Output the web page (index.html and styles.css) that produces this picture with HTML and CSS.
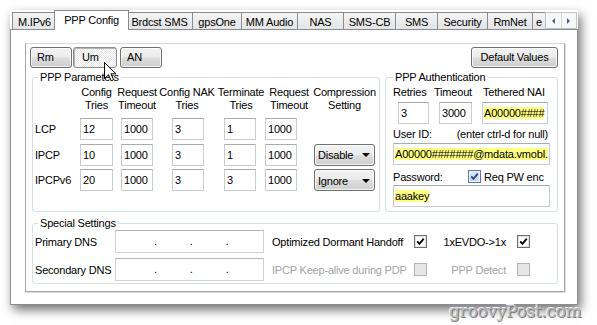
FILE: index.html
```html
<!DOCTYPE html>
<html>
<head>
<meta charset="utf-8">
<link rel="stylesheet" href="styles.css">
</head>
<body>
<div class="shot">
  <div class="tabstrip">
    <div class="tabs">
      <div class="tab t-mipv6">M.IPv6</div>
      <div class="tab sel">PPP Config</div>
      <div class="tab t-brd">Brdcst SMS</div>
      <div class="tab t-gps">gpsOne</div>
      <div class="tab t-mm">MM Audio</div>
      <div class="tab t-nas">NAS</div>
      <div class="tab t-smscb">SMS-CB</div>
      <div class="tab t-sms">SMS</div>
      <div class="tab t-sec">Security</div>
      <div class="tab t-rmnet">RmNet</div>
      <div class="tab t-e">e</div>
    </div>
    <div class="arrows"><span class="arr arr-l"></span><span class="arr arr-r"></span></div>
  </div>
  <div class="frame">
    <div class="inner">
      <div class="topbar">
        <button class="btn b-rm">Rm</button>
        <button class="btn b-um">Um</button>
        <button class="btn b-an">AN</button>
        <button class="btn b-def">Default Values</button>
      </div>
      <div class="groups">
        <fieldset class="grp grp-ppp">
          <legend>PPP Parameters</legend>
          <div class="ppp-grid">
            <div></div>
            <div class="hd hd-w33"><span>Config<br>Tries</span></div>
            <div class="hd"><span>Request<br>Timeout</span></div>
            <div class="hd hd-nak"><span>Config NAK<br>Tries</span></div>
            <div class="hd hd-term"><span>Terminate<br>Tries</span></div>
            <div class="hd hd-req2"><span>Request<br>Timeout</span></div>
            <div class="hd hd-w61"><span>Compression<br>Setting</span></div>

            <div class="lbl">LCP</div>
            <div class="tb tb-w33">12</div>
            <div class="tb">1000</div>
            <div class="tb">3</div>
            <div class="tb">1</div>
            <div class="tb">1000</div>
            <div></div>

            <div class="lbl">IPCP</div>
            <div class="tb tb-w33">10</div>
            <div class="tb">1000</div>
            <div class="tb">3</div>
            <div class="tb">1</div>
            <div class="tb">1000</div>
            <div class="cb"><span>Disable</span><i class="caret"></i></div>

            <div class="lbl">IPCPv6</div>
            <div class="tb tb-w33">20</div>
            <div class="tb">1000</div>
            <div class="tb">3</div>
            <div class="tb">3</div>
            <div class="tb">1000</div>
            <div class="cb"><span>Ignore</span><i class="caret"></i></div>
          </div>
        </fieldset>
        <fieldset class="grp grp-auth">
          <legend>PPP Authentication</legend>
          <div class="auth">
            <div class="auth-top">
              <div>Retries</div>
              <div>Timeout</div>
              <div class="nai-lbl">Tethered NAI</div>
              <div class="tb a-ret">3</div>
              <div class="tb a-to">3000</div>
              <div class="tb a-nai"><span class="hl">A00000####</span></div>
            </div>
            <div class="user-row"><span>User ID:</span><span>(enter ctrl-d for null)</span></div>
            <div class="tb wide"><span class="hl">A00000#######@mdata.vmobl.</span></div>
            <div class="pw-row">
              <span class="pw-lbl">Password:</span>
              <span class="chk chk-hot"><svg viewBox="0 0 11 11" width="11" height="11"><path d="M2.2 5.4 L4.4 7.8 L8.8 2.6" fill="none" stroke="#2b4a7a" stroke-width="1.8"/></svg></span>
              <span class="pw-opt">Req PW enc</span>
            </div>
            <div class="tb wide"><span class="hl">aaakey</span></div>
          </div>
        </fieldset>
      </div>
      <fieldset class="grp grp-spec">
        <legend>Special Settings</legend>
        <div class="spec-grid">
          <div class="lbl">Primary DNS</div>
          <div class="ip"><span>.</span><span>.</span><span>.</span></div>
          <div class="opt">Optimized Dormant Handoff</div>
          <span class="chk"><svg viewBox="0 0 11 11" width="11" height="11"><path d="M2.2 5.4 L4.4 7.8 L8.8 2.6" fill="none" stroke="#000" stroke-width="1.8"/></svg></span>
          <div class="opt2">1xEVDO-&gt;1x</div>
          <span class="chk"><svg viewBox="0 0 11 11" width="11" height="11"><path d="M2.2 5.4 L4.4 7.8 L8.8 2.6" fill="none" stroke="#000" stroke-width="1.8"/></svg></span>

          <div class="lbl">Secondary DNS</div>
          <div class="ip"><span>.</span><span>.</span><span>.</span></div>
          <div class="opt dis">IPCP Keep-alive during PDP</div>
          <span class="chk chk-dis"></span>
          <div class="opt2 dis">PPP Detect</div>
          <span class="chk chk-dis"></span>
        </div>
      </fieldset>
    </div>
  </div>
  <svg class="cursor" width="13" height="20" viewBox="0 0 13 20"><path d="M0.5 0.5 L0.5 16.5 L4.5 12.8 L7.2 18.8 L9.6 17.8 L7 11.8 L12 11.8 Z" fill="#fff" stroke="#000" stroke-width="1"/></svg>
</div>
<div class="wm">groovyPost.com</div>
</body>
</html>
```
FILE: styles.css
```css
* { box-sizing: border-box; }
html, body { margin: 0; padding: 0; background: #fff; }
body {
  font-family: "Liberation Sans", Arial, sans-serif;
  font-size: 11px;
  letter-spacing: -0.2px;
  color: #000;
  width: 597px;
  height: 325px;
  overflow: hidden;
  position: relative;
}
.shot {
  position: relative;
  margin: 10px 0 0 10px;
  width: 568px;
  height: 295px;
  background: #fff;
  box-shadow: 3px 5px 10px rgba(0, 0, 0, 0.55);
}

/* tabs */
.tabstrip {
  position: relative;
  z-index: 1;
  display: flex;
  height: 20px;
  padding-left: 2px;
}
.tabs {
  display: flex;
  align-items: flex-end;
  width: 533px;
  height: 20px;
  overflow: hidden;
  flex: none;
}
.tab {
  flex: none;
  height: 17px;
  margin-bottom: 1px;
  margin-left: -1px;
  border: 1px solid #898c95;
  border-bottom: 0;
  background: linear-gradient(#f4f4f4, #e4e4e4);
  display: flex;
  align-items: center;
  justify-content: center;
  white-space: nowrap;
  padding-top: 1px;
}
.tab:first-child { margin-left: 0; }
.t-mipv6 { width: 45px; }
.tab.sel {
  position: relative;
  z-index: 2;
  width: 75px;
  height: 20px;
  margin: 0 -2px 0 -3px;
  background: #fff;
  padding-top: 0;
  padding-bottom: 2px;
}
.t-brd { width: 67px; }
.t-gps { width: 50px; }
.t-mm { width: 57px; }
.t-nas { width: 47px; }
.t-smscb { width: 53px; }
.t-sms { width: 43px; }
.t-sec { width: 51px; }
.t-rmnet { width: 46px; }
.t-e { width: 30px; justify-content: flex-start; padding-left: 3px; }
.arrows {
  flex: none;
  width: 32px;
  height: 17px;
  margin-top: 2px;
  border: 1px solid #c3c3c3;
  background: #f7f7f7;
  display: flex;
}
.arr {
  flex: 1;
  display: flex;
  align-items: center;
  justify-content: center;
  border-right: 1px solid #d8d8d8;
}
.arr:last-child { border-right: 0; }
.arr::before {
  content: "";
  width: 0;
  height: 0;
  border-top: 3px solid transparent;
  border-bottom: 3px solid transparent;
}
.arr-l::before { border-right: 3px solid #4f6280; }
.arr-r::before { border-left: 3px solid #4f6280; }

/* frame */
.frame {
  margin-top: -1px;
  height: 276px;
  border: 1px solid #898c95;
  padding: 13px 0 0 14px;
  background: #fff;
}
.inner {
  width: 540px;
  height: 249px;
  border: 1px solid #a6a6a6;
  border-top-color: #d8d8d8;
  box-shadow: 1px 1px 0 #dedede;
  padding: 3px 6px 0 4px;
}
.topbar {
  display: flex;
  height: 21px;
}
.btn {
  height: 21px;
  margin: 0;
  border: 1px solid #707070;
  border-radius: 3px;
  background: linear-gradient(#f2f2f2 0%, #ebebeb 48%, #dddddd 52%, #cfcfcf 100%);
  box-shadow: inset 0 0 0 1px rgba(255, 255, 255, 0.7);
  font-family: "Liberation Sans", Arial, sans-serif;
  font-size: 11px;
  letter-spacing: -0.2px;
  color: #000;
  text-align: left;
  padding: 0 0 0 6px;
  line-height: 19px;
}
.b-rm { width: 42px; }
.b-um {
  width: 44px;
  margin-left: 1px;
  padding-left: 8px;
  border-color: #8b8b8b;
  background: repeating-conic-gradient(#ffffff 0 25%, #e6e6e6 0 50%) 0 0 / 2px 2px;
  box-shadow: inset 1px 1px 0 #b5b5b5;
}
.b-an { width: 42px; margin-left: 3px; }
.b-def {
  width: 87px;
  margin-left: auto;
  text-align: center;
  padding: 0;
}

/* group boxes */
.groups {
  display: flex;
  gap: 5px;
  margin-top: 3px;
  padding-left: 2px;
}
.grp {
  margin: 0;
  padding: 0;
  min-width: 0;
  border: 1px solid #d5dfe5;
  border-radius: 3px;
}
.grp legend {
  padding: 0 2px;
  margin-left: 5px;
  line-height: 12px;
  font-size: 11px;
}
.grp-ppp { width: 348px; height: 141px; flex: none; }
.grp-auth { width: 173px; height: 141px; flex: none; }
.grp-auth legend { margin-left: 7px; }
.grp-spec { width: 526px; height: 67px; margin: 5px 0 0 2px; }

.ppp-grid {
  display: grid;
  grid-template-columns: 47px 41px 51px 52px 41px 49px 61px;
  grid-template-rows: 28.5px 22px 22px 22px;
  row-gap: 3.5px;
  margin-top: 3px;
}
.hd {
  width: 32px;
  display: flex;
  justify-content: center;
  align-items: flex-start;
  text-align: center;
  white-space: nowrap;
  line-height: 13px;
}
.hd-w33 { width: 33px; }
.hd-w61 { width: 61px; }
.hd-nak { margin-left: -1px; }
.hd-term { margin-left: 1px; }
.hd-req2 { margin-left: 8px; }
.lbl {
  align-self: center;
  padding-left: 2px;
  white-space: nowrap;
}
.tb {
  width: 32px;
  height: 22px;
  border: 1px solid #c9ccd2;
  border-top-color: #a9abb2;
  background: #fff;
  padding: 0 2px;
  line-height: 20px;
  white-space: nowrap;
  overflow: hidden;
}
.tb-w33 { width: 33px; }
.cb {
  width: 61px;
  height: 22px;
  border: 1px solid #707070;
  border-radius: 3px;
  background: linear-gradient(#f2f2f2 0%, #ebebeb 48%, #dddddd 52%, #cfcfcf 100%);
  box-shadow: inset 0 0 0 1px rgba(255, 255, 255, 0.7);
  display: flex;
  align-items: center;
  justify-content: space-between;
  padding: 1px 4px 0 3px;
}
.caret {
  width: 0;
  height: 0;
  border-left: 4px solid transparent;
  border-right: 4px solid transparent;
  border-top: 4px solid #000;
}

/* auth */
.auth { padding: 3px 7px 0 7px; }
.auth-top {
  display: grid;
  grid-template-columns: 41px 48px 1fr;
  grid-template-rows: 13px 22px;
  row-gap: 3px;
  line-height: 13px;
}
.nai-lbl { margin-left: 1px; }
.a-ret { width: 31px; margin-left: 5px; }
.a-to { width: 33px; margin-left: 5px; }
.a-nai { width: 66px; padding-left: 1px; }
.hl { background: #ffff80; }
.user-row {
  display: flex;
  justify-content: space-between;
  margin-top: 4px;
  line-height: 13px;
  padding-right: 2px;
}
.tb.wide {
  width: 157px;
  margin-top: 2px;
  padding-left: 1px;
}
.pw-row {
  display: flex;
  align-items: center;
  margin-top: 5px;
  height: 13px;
}
.pw-lbl { width: 75px; flex: none; }
.pw-opt { margin-left: 3px; }

.chk {
  width: 13px;
  height: 13px;
  border: 1px solid #6f6f6f;
  background: #fff;
  box-shadow: inset 0 0 0 1px #e2e2e2;
  display: flex;
  align-items: center;
  justify-content: center;
}
.chk-hot {
  border-color: #5a7aa8;
  background: linear-gradient(#d8e8f8, #c2d9f2);
  box-shadow: inset 0 0 0 1px #eaf2fb;
}
.chk-dis {
  border-color: #b4b4b4;
  background: #e6e6e6;
  box-shadow: none;
}

/* special */
.spec-grid {
  display: grid;
  grid-template-columns: 82px 149px 150px 13px 90px 13px;
  grid-template-rows: 23px 23px;
  row-gap: 5px;
  margin-top: 1px;
  align-items: center;
}
.ip {
  height: 23px;
  border: 1px solid #cfd2d7;
  border-top-color: #b3b5bb;
  display: flex;
  align-items: center;
  padding-left: 38px;
  gap: 33px;
  line-height: 13px;
}
.opt { padding-left: 8px; white-space: nowrap; }
.opt2 { text-align: right; padding-right: 11px; white-space: nowrap; }
.dis { color: #a3a3a3; }

.cursor {
  position: absolute;
  left: 94px;
  top: 52px;
}
.wm {
  position: absolute;
  left: 449px;
  top: 301px;
  font-family: "DejaVu Serif", serif;
  font-size: 17px;
  color: #b6b6b6;
  text-shadow: 1px 1px 0 #7c7c7c, -1px -1px 0 #f2f2f2;
  letter-spacing: -0.3px;
}
```
